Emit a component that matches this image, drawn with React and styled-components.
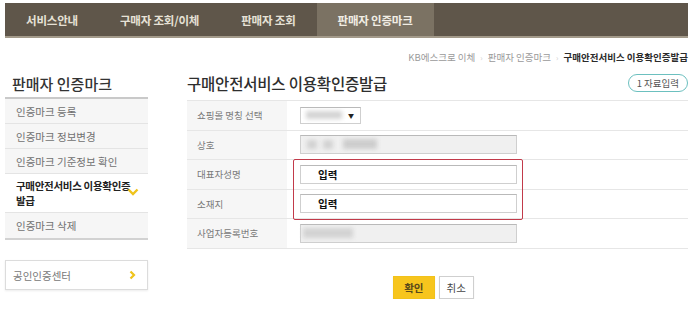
import React from "react";
import styled, { createGlobalStyle } from "styled-components";

const Global = createGlobalStyle`
  html, body { margin: 0; padding: 0; background: #fff; }
  body { font-family: "Noto Sans CJK KR", "Noto Sans", sans-serif; color: #333; }
  * { box-sizing: border-box; }
`;

const Page = styled.div`
  width: 700px;
  padding: 3px 12px 0 5px;
`;

const Nav = styled.nav`
  display: flex;
  height: 35px;
  background: #5f564a;
  border-bottom: 2px solid #a39a8a;
`;

const Tab = styled.div`
  display: flex;
  align-items: center;
  padding: 0 ${(p) => p.$pad || 21}px;
  font-size: 11.5px;
  font-weight: 700;
  color: ${(p) => (p.$active ? "#f1ede4" : "#e6e1d6")};
  background: ${(p) => (p.$active ? "#7b7263" : "transparent")};
  letter-spacing: -0.2px;
`;

const Crumbs = styled.div`
  display: flex;
  justify-content: flex-end;
  align-items: center;
  gap: 5px;
  margin-top: 12px;
  height: 14px;
  font-size: 9.5px;
  color: #9a9a9a;
`;

const Sep = styled.span`
  color: #cfcfcf;
  font-size: 8px;
`;

const Current = styled.span`
  color: #2b2b2b;
  font-weight: 700;
`;

const Main = styled.div`
  display: flex;
  align-items: flex-start;
`;

const Side = styled.aside`
  width: 143px;
  flex-shrink: 0;
`;

const SideTitle = styled.h2`
  margin: 0;
  height: 35px;
  display: flex;
  align-items: center;
  padding: 6px 0 0 7px;
  font-size: 15px;
  font-weight: 500;
  color: #333;
  border-bottom: 2px solid #c9c9c9;
`;

const Menu = styled.ul`
  list-style: none;
  margin: 0;
  padding: 0;
  border-bottom: 2px solid #d2d2d2;
`;

const MenuItem = styled.li`
  position: relative;
  display: flex;
  align-items: center;
  min-height: 25px;
  padding: ${(p) => (p.$active ? "4px 12px 4px 11px" : "0 10px 0 11px")};
  font-size: 10.5px;
  line-height: 15px;
  letter-spacing: ${(p) => (p.$active ? "-0.3px" : "0")};
  color: ${(p) => (p.$active ? "#222" : "#707070")};
  font-weight: ${(p) => (p.$active ? 700 : 400)};
  background: ${(p) => (p.$active ? "#fff" : "#f6f6f6")};
  border-bottom: 1px solid #e4e4e4;
  &:last-child { border-bottom: none; }
`;

const ChevronBox = styled.span`
  position: absolute;
  right: 9px;
  top: 14px;
  display: flex;
`;

const CertBox = styled.div`
  margin-top: 20px;
  height: 30px;
  display: flex;
  align-items: center;
  justify-content: space-between;
  padding: 0 11px 0 7px;
  border: 1px solid #dcdcdc;
  box-shadow: 0 1px 2px rgba(0,0,0,0.08);
  font-size: 10.5px;
  color: #777;
`;

const Content = styled.section`
  flex: 1;
  margin-left: 39px;
`;

const Header = styled.div`
  height: 36px;
  display: flex;
  align-items: center;
  justify-content: space-between;
  padding-top: 2px;
`;

const Title = styled.h1`
  margin: 0;
  font-size: 15.5px;
  font-weight: 500;
  color: #2e2e2e;
  letter-spacing: -0.2px;
`;

const Pill = styled.span`
  height: 18px;
  padding: 0 8px;
  border: 1.5px solid #6cc0bf;
  border-radius: 10px;
  font-size: 9.5px;
  color: #555;
  display: flex;
  align-items: center;
`;

const Table = styled.div`
  position: relative;
  border-top: 1px solid #e6e6e6;
`;

const Row = styled.div`
  display: grid;
  grid-template-columns: 100px 1fr;
  height: 29.5px;
  border-bottom: 1px solid #e6e6e6;
`;

const Label = styled.div`
  background: #f6f6f6;
  display: flex;
  align-items: center;
  padding-left: 10px;
  font-size: 9.5px;
  color: #7a7a7a;
`;

const Value = styled.div`
  display: flex;
  align-items: center;
  padding-left: 13px;
`;

const Field = styled.div`
  position: relative;
  width: ${(p) => p.$w || 217}px;
  height: ${(p) => p.$h || 19}px;
  display: flex;
  align-items: center;
  padding-left: 17px;
  border: 1px solid #cfcfcf;
  border-top-color: #b9b9b9;
  background: ${(p) => (p.$disabled ? "#f0f0f0" : "#fff")};
  font-size: 10.5px;
  font-weight: 700;
  color: #111;
`;

const Blur = styled.span`
  position: absolute;
  left: ${(p) => p.$l}px;
  top: ${(p) => p.$t || 4}px;
  width: ${(p) => p.$w}px;
  height: ${(p) => p.$h || 9}px;
  background: ${(p) => p.$c || "#cfcfcf"};
  filter: blur(2px);
`;

const Arrow = styled.span`
  position: absolute;
  right: 6px;
  top: 3px;
  font-size: 6px;
  color: #222;
`;

const Highlight = styled.div`
  position: absolute;
  left: 106px;
  top: 58px;
  width: 230px;
  height: 61px;
  border: 1.5px solid #c23a4a;
  border-radius: 2px;
  pointer-events: none;
`;

const Buttons = styled.div`
  display: flex;
  justify-content: center;
  gap: 4px;
  margin-top: 27px;
  padding-right: 8px;
`;

const Btn = styled.button`
  height: 23px;
  padding: 0 ${(p) => (p.$primary ? 10 : 7)}px;
  border: 1px solid ${(p) => (p.$primary ? "#f2c21a" : "#cfcfcf")};
  background: ${(p) => (p.$primary ? "#f7c51d" : "#fff")};
  color: ${(p) => (p.$primary ? "#5a4a1a" : "#444")};
  font-family: inherit;
  font-size: 10.5px;
  font-weight: ${(p) => (p.$primary ? 700 : 400)};
  box-shadow: 0 1px 1px rgba(0,0,0,0.1);
`;

const ChevronDown = () => (
  <svg width="12" height="8" viewBox="0 0 12 8">
    <polyline points="1.5,1.5 6,6 10.5,1.5" fill="none" stroke="#efc31b" strokeWidth="2.4" />
  </svg>
);

const ChevronRight = () => (
  <svg width="7" height="10" viewBox="0 0 7 10">
    <polyline points="1.5,1.5 5,5 1.5,8.5" fill="none" stroke="#efc31b" strokeWidth="2.2" />
  </svg>
);

export default function App() {
  return (
    <Page>
      <Global />
      <Nav>
        <Tab>서비스안내</Tab>
        <Tab>구매자 조회/이체</Tab>
        <Tab>판매자 조회</Tab>
        <Tab $active>판매자 인증마크</Tab>
      </Nav>
      <Crumbs>
        <span>KB에스크로 이체</span>
        <Sep>›</Sep>
        <span>판매자 인증마크</span>
        <Sep>›</Sep>
        <Current>구매안전서비스 이용확인증발급</Current>
      </Crumbs>
      <Main>
        <Side>
          <SideTitle>판매자 인증마크</SideTitle>
          <Menu>
            <MenuItem>인증마크 등록</MenuItem>
            <MenuItem>인증마크 정보변경</MenuItem>
            <MenuItem>인증마크 기준정보 확인</MenuItem>
            <MenuItem $active>
              구매안전서비스 이용확인증 발급
              <ChevronBox>
                <ChevronDown />
              </ChevronBox>
            </MenuItem>
            <MenuItem>인증마크 삭제</MenuItem>
          </Menu>
          <CertBox>
            <span>공인인증센터</span>
            <ChevronRight />
          </CertBox>
        </Side>
        <Content>
          <Header>
            <Title>구매안전서비스 이용확인증발급</Title>
            <Pill>1 자료입력</Pill>
          </Header>
          <Table>
            <Row>
              <Label>쇼핑몰 명칭 선택</Label>
              <Value>
                <Field $w={61} $h={17}>
                  <Blur $l={5} $t={3} $w={36} $h={8} $c="#d4d4d4" />
                  <Arrow>▼</Arrow>
                </Field>
              </Value>
            </Row>
            <Row>
              <Label>상호</Label>
              <Value>
                <Field $disabled>
                  <Blur $l={6} $t={4} $w={10} $c="#d2d2d2" />
                  <Blur $l={22} $t={4} $w={10} $c="#d2d2d2" />
                  <Blur $l={42} $t={3} $w={34} $h={10} $c="#cdcdcd" />
                </Field>
              </Value>
            </Row>
            <Row>
              <Label>대표자성명</Label>
              <Value>
                <Field>입력</Field>
              </Value>
            </Row>
            <Row>
              <Label>소재지</Label>
              <Value>
                <Field>입력</Field>
              </Value>
            </Row>
            <Row>
              <Label>사업자등록번호</Label>
              <Value>
                <Field $disabled>
                  <Blur $l={2} $t={3} $w={50} $h={10} $c="#d3d3d3" />
                </Field>
              </Value>
            </Row>
            <Highlight />
          </Table>
          <Buttons>
            <Btn $primary>확인</Btn>
            <Btn>취소</Btn>
          </Buttons>
        </Content>
      </Main>
    </Page>
  );
}
